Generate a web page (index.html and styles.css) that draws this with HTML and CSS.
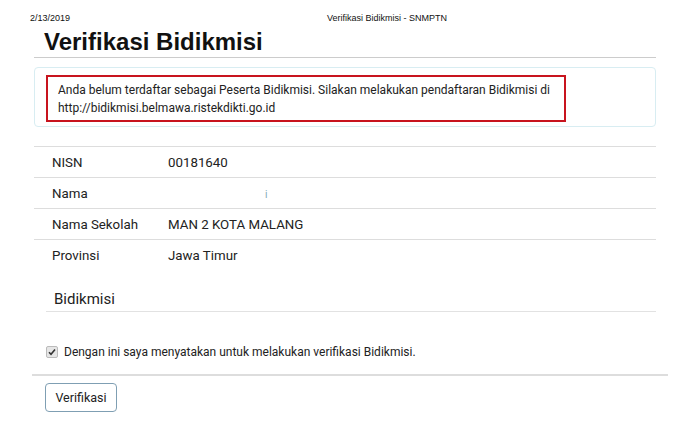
FILE: index.html
```html
<!DOCTYPE html>
<html lang="id">
<head>
  <meta charset="UTF-8" />
  <title>Verifikasi Bidikmisi - SNMPTN</title>
  <link rel="stylesheet" href="styles.css">
</head>
<body>
  <div class="print-head">
    <span class="print-date">2/13/2019</span>
    <span class="print-title">Verifikasi Bidikmisi - SNMPTN</span>
  </div>

  <div class="page">
    <h1 class="page-title">Verifikasi Bidikmisi</h1>

    <div class="info-box">
      <div class="alert">
        Anda belum terdaftar sebagai Peserta Bidikmisi. Silakan melakukan pendaftaran Bidikmisi di
        http://bidikmisi.belmawa.ristekdikti.go.id
      </div>
    </div>

    <table class="data">
      <tr><td class="label">NISN</td><td>00181640</td></tr>
      <tr><td class="label">Nama</td><td><span class="blank">i</span></td></tr>
      <tr><td class="label">Nama Sekolah</td><td>MAN 2 KOTA MALANG</td></tr>
      <tr><td class="label">Provinsi</td><td>Jawa Timur</td></tr>
    </table>

    <h3 class="section">Bidikmisi</h3>

    <label class="agree">
      <span class="check">
        <svg width="8" height="8" viewBox="0 0 8 8"><path d="M1 4.3 L3 6.3 L7 1.5" fill="none" stroke="#333" stroke-width="1.6"/></svg>
      </span>
      Dengan ini saya menyatakan untuk melakukan verifikasi Bidikmisi.
    </label>
  </div>

  <div class="actions">
    <button class="btn">Verifikasi</button>
  </div>
</body>
</html>
```

FILE: styles.css
```css
body {
  margin: 0;
  font-family: Roboto, 'Liberation Sans', sans-serif;
  color: #222;
  background: #fff;
}

.print-head {
  position: relative;
  height: 24px;
  font-family: 'Liberation Sans', Arial, sans-serif;
  font-size: 9px;
  color: #111;
}

.print-date {
  position: absolute;
  left: 30px;
  top: 13px;
}

.print-title {
  position: absolute;
  left: 0;
  right: 0;
  top: 13px;
  text-align: center;
  padding-left: 74px;
}

.page {
  width: 622px;
  margin-left: 34px;
}

.page-title {
  font-family: 'Liberation Sans', Arial, sans-serif;
  font-size: 24px;
  font-weight: bold;
  color: #111;
  margin: 0;
  padding: 4px 0 2px 10px;
  line-height: 27px;
  border-bottom: 1px solid #ccc;
}

.info-box {
  margin-top: 9px;
  border: 1px solid #d8edf2;
  border-radius: 4px;
  padding: 7px 11px;
  box-sizing: border-box;
  height: 60px;
}

.alert {
  width: 520px;
  box-sizing: border-box;
  border: 2px solid #c8141e;
  padding: 4px 10px 3px;
  font-size: 12px;
  line-height: 18px;
  color: #222;
}

.data {
  width: 100%;
  margin-top: 19px;
  border-collapse: collapse;
  font-size: 13.3px;
  color: #222;
}

.data td {
  border-top: 1px solid #ddd;
  height: 30px;
  padding: 0;
  vertical-align: middle;
}

.data .label {
  width: 116px;
  padding-left: 18px;
}

.blank {
  color: #7fa9b5;
  font-size: 10px;
  margin-left: 97px;
}

.section {
  font-size: 15px;
  font-weight: normal;
  color: #222;
  margin: 21px 0 0 12px;
  padding: 0 0 3px 8px;
  border-bottom: 1px solid #e2e2e2;
  line-height: 17px;
}

.agree {
  display: flex;
  align-items: center;
  margin: 33px 0 0 12px;
  font-size: 12px;
  color: #222;
  padding-bottom: 15px;
}

.check {
  display: inline-flex;
  align-items: center;
  justify-content: center;
  width: 10px;
  height: 10px;
  margin-right: 6px;
  border: 1px solid #bbb;
  border-radius: 2px;
  background: #e6e6e6;
}

.actions {
  margin: 0 32px;
  border-top: 2px solid #ddd;
  padding: 7px 0 0 13px;
}

.btn {
  font-family: Roboto, 'Liberation Sans', sans-serif;
  font-size: 12.5px;
  color: #222;
  background: #fff;
  border: 1px solid #7f9fb3;
  border-radius: 4px;
  width: 72px;
  height: 29px;
}
```
